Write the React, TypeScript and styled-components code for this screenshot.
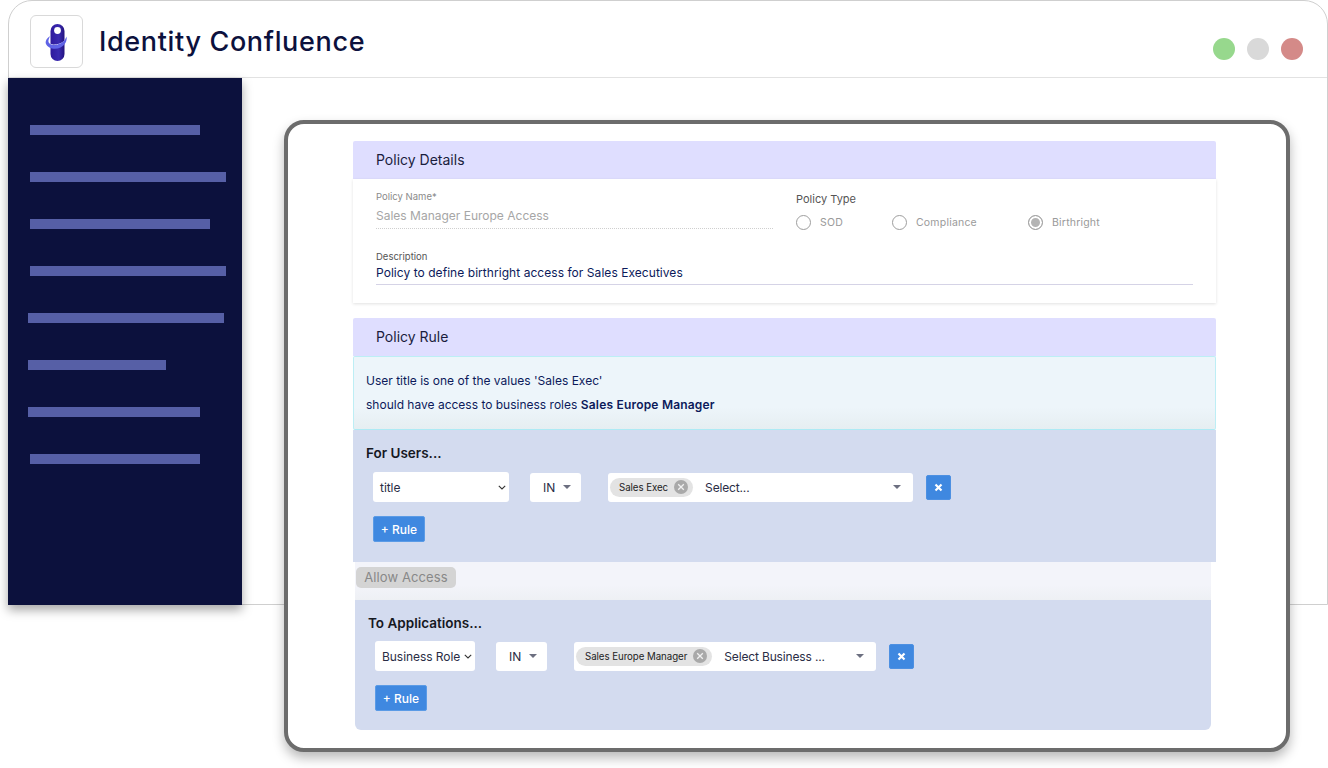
import React from 'react'
import styled, { createGlobalStyle } from 'styled-components'

const navBars = [
  { left: 22, width: 170 },
  { left: 22, width: 196 },
  { left: 22, width: 180 },
  { left: 22, width: 196 },
  { left: 20, width: 196 },
  { left: 20, width: 138 },
  { left: 20, width: 172 },
  { left: 22, width: 170 },
]

const Logo = () => (
  <svg width="24" height="40" viewBox="0 0 24 40">
    <defs>
      <linearGradient id="pill" x1="0" y1="0" x2="1" y2="0">
        <stop offset="0" stopColor="#2f1a9c" />
        <stop offset="0.6" stopColor="#3a2ab0" />
        <stop offset="1" stopColor="#23127e" />
      </linearGradient>
    </defs>
    <rect x="5.500" y="1" width="14" height="37" rx="7" fill="url(#pill)" />
    <circle cx="12.500" cy="7.500" r="3.400" fill="#fff" />
    <path d="M3.500 19.500c1 2.200 5 3.200 10 1.800 4-1.200 7-3.800 7.500-6.500" fill="none" stroke="#cfd2fa" strokeWidth="1" />
    <path d="M5.500 13C1.500 15 0 18.500 1 21c2 4.500 9 6 14.500 3.500 4.500-2.200 7-7 6-11-1 4-5.500 7.500-10 8.500-4 .8-7.500-.5-8-3-.3-1.800.5-4 2-6.500z" fill="#5f63e6" />
  </svg>
)

const ClearIcon = () => (
  <svg width="14" height="14" viewBox="0 0 14 14">
    <circle cx="7" cy="7" r="7" fill="#a9a9a9" />
    <path d="M4.200 4.200l5.600 5.600M9.800 4.200l-5.600 5.600" stroke="#f1f1f1" strokeWidth="1.300" />
  </svg>
)

const Chevron = () => (
  <svg width="8" height="5" viewBox="0 0 8 5">
    <path d="M.8.8L4 4l3.200-3.200" fill="none" stroke="#333" strokeWidth="1.100" />
  </svg>
)

const RemoveIcon = () => (
  <svg width="9" height="9" viewBox="0 0 9 9">
    <path d="M1.500 1.500l6 6M7.500 1.500l-6 6" stroke="#fff" strokeWidth="2.200" />
  </svg>
)

interface RuleRowProps {
  field: string
  fieldWidth: number
  chip: string
  placeholder: string
  valueWidth: number
}

const RuleRow = ({ field, fieldWidth, chip, placeholder, valueWidth }: RuleRowProps) => (
  <Row>
    <FieldSelect $width={fieldWidth}>
      {field}
      <Chevron />
    </FieldSelect>
    <OperatorSelect>
      IN
      <Caret />
    </OperatorSelect>
    <ValueSelect $width={valueWidth}>
      <Chip>
        {chip}
        <ClearIcon />
      </Chip>
      <Placeholder>{placeholder}</Placeholder>
      <Caret />
    </ValueSelect>
    <RemoveButton>
      <RemoveIcon />
    </RemoveButton>
  </Row>
)

export default function App() {
  return (
    <Page>
      <GlobalStyle />
      <Window>
        <Header>
          <LogoBox>
            <Logo />
          </LogoBox>
          <Title>Identity Confluence</Title>
          <Dots>
            <Dot $color="#97d88d" />
            <Dot $color="#d9d9d9" />
            <Dot $color="#d48a88" />
          </Dots>
        </Header>
        <Body>
          <Sidebar>
            {navBars.map((bar, i) => (
              <NavBar key={i} $left={bar.left} $width={bar.width} />
            ))}
          </Sidebar>
          <Main>
            <Card>
              <SectionHead>Policy Details</SectionHead>
              <DetailsBody>
                <div>
                  <SmallLabel>Policy Name*</SmallLabel>
                  <NameValue>Sales Manager Europe Access</NameValue>
                </div>
                <div>
                  <TypeLabel>Policy Type</TypeLabel>
                  <RadioGroup>
                    <RadioOption $width={96}>
                      <Radio />
                      SOD
                    </RadioOption>
                    <RadioOption $width={136}>
                      <Radio />
                      Compliance
                    </RadioOption>
                    <RadioOption $width={80}>
                      <Radio $checked />
                      Birthright
                    </RadioOption>
                  </RadioGroup>
                </div>
                <DescriptionField>
                  <DescriptionLabel>Description</DescriptionLabel>
                  <DescriptionValue>Policy to define birthright access for Sales Executives</DescriptionValue>
                </DescriptionField>
              </DetailsBody>
              <RuleHead>Policy Rule</RuleHead>
              <Summary>
                <SummaryLine>User title is one of the values 'Sales Exec'</SummaryLine>
                <SummaryLine>
                  should have access to business roles <b>Sales Europe Manager</b>
                </SummaryLine>
              </Summary>
              <UsersPanel>
                <PanelTitle>For Users...</PanelTitle>
                <RuleRow
                  field="title"
                  fieldWidth={136}
                  chip="Sales Exec"
                  placeholder="Select..."
                  valueWidth={305}
                />
                <RuleButton>+ Rule</RuleButton>
              </UsersPanel>
              <AllowBand>
                <AllowPill>Allow Access</AllowPill>
              </AllowBand>
              <AppsPanel>
                <PanelTitle>To Applications...</PanelTitle>
                <RuleRow
                  field="Business Role"
                  fieldWidth={100}
                  chip="Sales Europe Manager"
                  placeholder="Select Business ..."
                  valueWidth={302}
                />
                <RuleButton>+ Rule</RuleButton>
              </AppsPanel>
            </Card>
          </Main>
        </Body>
      </Window>
    </Page>
  )
}

const GlobalStyle = createGlobalStyle`
  * {
    box-sizing: border-box;
  }
  body {
    margin: 0;
    background: #fff;
    font-family: Inter, "Liberation Sans", sans-serif;
    color: #0c1a5a;
  }
`

const Page = styled.div`
  height: 768px;
  padding-left: 8px;
`

const Window = styled.div`
  height: 605px;
  border: 1px solid #cfcfcf;
  border-radius: 24px 24px 0 0;
`

const Header = styled.header`
  height: 77px;
  display: flex;
  align-items: center;
  padding: 5px 24px 0 21px;
  border-bottom: 1px solid #e2e2e2;
`

const LogoBox = styled.div`
  width: 53px;
  height: 53px;
  padding-top: 2px;
  display: flex;
  align-items: center;
  justify-content: center;
  border: 1.5px solid #d9d9d9;
  border-radius: 6px;
`

const Title = styled.h1`
  margin: 0 0 0 16px;
  font-size: 27px;
  font-weight: 500;
  letter-spacing: 0.65px;
  color: #0c113d;
`

const Dots = styled.div`
  display: flex;
  gap: 12px;
  margin: 14px 0 0 auto;
`

const Dot = styled.span<{ $color: string }>`
  width: 22px;
  height: 22px;
  border-radius: 50%;
  background: ${p => p.$color};
`

const Body = styled.div`
  display: flex;
`

const Sidebar = styled.nav`
  width: 234px;
  height: 527px;
  margin-left: -1px;
  padding-top: 47px;
  display: flex;
  flex-direction: column;
  gap: 37px;
  background: #0c113d;
  box-shadow: 0 5px 10px rgba(0, 0, 0, 0.35);
`

const NavBar = styled.div<{ $left: number; $width: number }>`
  height: 10px;
  width: ${p => p.$width}px;
  margin-left: ${p => p.$left}px;
  background: #565fa6;
`

const Main = styled.main`
  padding: 42px 0 0 42px;
`

const Card = styled.section`
  width: 1006px;
  height: 632px;
  padding: 17px 70px 0 65px;
  background: #fff;
  border: 4px solid #6c6c6c;
  border-radius: 20px;
  box-shadow: 0 6px 12px rgba(0, 0, 0, 0.28);
`

const SectionHead = styled.div`
  height: 38px;
  display: flex;
  align-items: center;
  padding: 0 0 2px 23px;
  background: #dfdeff;
  font-size: 14px;
  color: #1a1d3d;
  border-radius: 2px 2px 0 0;
`

const RuleHead = styled(SectionHead)`
  margin-top: 15px;
`

const DetailsBody = styled.div`
  height: 124px;
  display: grid;
  grid-template-columns: 397px 1fr;
  grid-template-rows: 60px 1fr;
  column-gap: 23px;
  padding: 12px 23px 0;
  box-shadow: 0 1px 3px rgba(0, 0, 0, 0.12);
`

const SmallLabel = styled.div`
  font-size: 9.500px;
  line-height: 12px;
  color: #8a8a8a;
`

const NameValue = styled.div`
  margin-top: 6px;
  padding-bottom: 5px;
  font-size: 12px;
  line-height: 14px;
  color: #a6a6a6;
  border-bottom: 1px dotted #cfcfcf;
`

const TypeLabel = styled.div`
  margin-top: 2px;
  font-size: 11px;
  line-height: 13px;
  color: #555;
`

const RadioGroup = styled.div`
  display: flex;
  margin-top: 9px;
`

const RadioOption = styled.label<{ $width: number }>`
  width: ${p => p.$width}px;
  display: flex;
  align-items: center;
  gap: 9px;
  font-size: 10.500px;
  letter-spacing: 0.2px;
  color: #9a9a9a;
`

const Radio = styled.span<{ $checked?: boolean }>`
  width: 15px;
  height: 15px;
  flex-shrink: 0;
  border: 1px solid #9e9e9e;
  border-radius: 50%;
  background: ${p => (p.$checked ? '#b4b4b4' : '#fff')};
  box-shadow: ${p => (p.$checked ? 'inset 0 0 0 2px #fff' : 'none')};
`

const DescriptionField = styled.div`
  grid-column: 1 / 3;
`

const DescriptionLabel = styled(SmallLabel)`
  color: #555;
`

const DescriptionValue = styled.div`
  margin-top: 2px;
  padding-bottom: 4px;
  font-size: 12px;
  line-height: 15px;
  letter-spacing: 0.05px;
  color: #0c1a5a;
  border-bottom: 1.5px solid #d5d3e6;
`

const Summary = styled.div`
  height: 74px;
  padding: 12px 12px 0;
  background: linear-gradient(#edf5fa 70%, #e6eef1);
  border: 1px solid #bdeef5;
  border-bottom-color: #aeeaf4;
  border-radius: 2px;
`

const SummaryLine = styled.div`
  font-size: 12px;
  line-height: 24px;
  color: #0c1a5a;
  b {
    font-weight: 600;
    letter-spacing: 0.2px;
  }
`

const PanelTitle = styled.div`
  font-size: 13.500px;
  line-height: 18px;
  font-weight: 600;
  color: #16181f;
  margin-bottom: 10px;
`

const UsersPanel = styled.div`
  height: 132px;
  padding: 14px 13px 0;
  background: #d3dbef;
`

const AppsPanel = styled(UsersPanel)`
  height: 130px;
  margin: 0 5px 0 2px;
  border-radius: 0 0 6px 6px;
  ${PanelTitle} {
    margin-bottom: 9px;
  }
`

const Row = styled.div`
  height: 30px;
  margin-left: 7px;
  display: flex;
  align-items: center;
  font-size: 12px;
  letter-spacing: -0.05px;
  color: #2a2d45;
`

const FieldSelect = styled.div<{ $width: number }>`
  width: ${p => p.$width}px;
  height: 30px;
  padding: 0 3px 0 7px;
  display: flex;
  align-items: center;
  justify-content: space-between;
  background: #fff;
  border-radius: 3px;
`

const OperatorSelect = styled.div`
  width: 51px;
  height: 29px;
  margin-left: 21px;
  padding: 0 10px 0 13px;
  display: flex;
  align-items: center;
  justify-content: space-between;
  background: #fff;
  border-radius: 3px;
`

const Caret = styled.span`
  width: 0;
  height: 0;
  border-left: 4px solid transparent;
  border-right: 4px solid transparent;
  border-top: 4px solid #6c6f80;
`

const ValueSelect = styled.div<{ $width: number }>`
  width: ${p => p.$width}px;
  height: 29px;
  margin-left: 27px;
  padding: 0 12px 0 2px;
  display: flex;
  align-items: center;
  background: #fff;
  border-radius: 3px;
`

const Chip = styled.span`
  height: 19px;
  padding: 0 5px 0 9px;
  display: flex;
  align-items: center;
  gap: 6px;
  font-size: 9.700px;
  letter-spacing: -0.05px;
  color: #222;
  background: #e3e3e3;
  border-radius: 10px;
`

const Placeholder = styled.span`
  flex: 1;
  margin-left: 12px;
  letter-spacing: -0.15px;
`

const RemoveButton = styled.button`
  width: 25px;
  height: 25px;
  margin-left: 13px;
  padding: 0;
  display: flex;
  align-items: center;
  justify-content: center;
  background: #3f88e0;
  border: 1px solid #4d90e2;
  border-radius: 2px;
`

const RuleButton = styled.button`
  display: block;
  width: 52px;
  height: 26px;
  margin: 14px 0 0 7px;
  padding: 0;
  font-family: inherit;
  font-size: 12px;
  font-weight: 500;
  color: #fff;
  background: #3f88e0;
  border: 1px solid #5b9be6;
  border-radius: 2px;
`

const AllowBand = styled.div`
  height: 38px;
  margin: 0 5px 0 2px;
  padding: 5px 0 0 1px;
  background: linear-gradient(#f3f4fa 60%, #eef0f4);
`

const AllowPill = styled.span`
  width: 100px;
  height: 21px;
  padding-bottom: 1px;
  display: flex;
  align-items: center;
  justify-content: center;
  font-size: 13px;
  letter-spacing: 0.1px;
  color: #888;
  background: #d4d4d4;
  border-radius: 5px;
`
